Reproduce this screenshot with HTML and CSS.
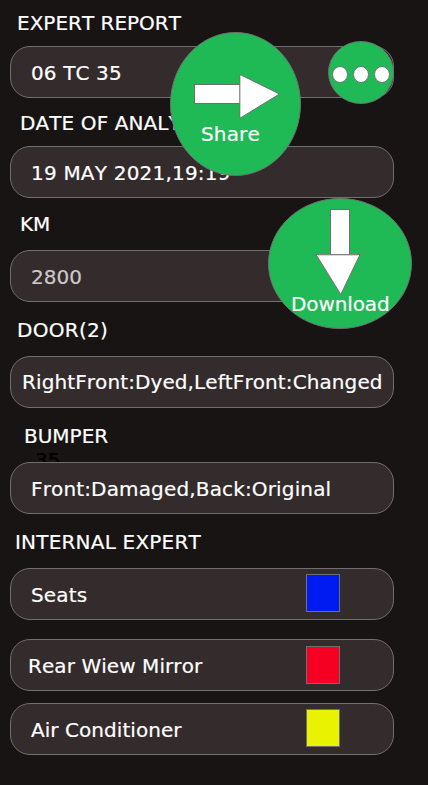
FILE: index.html
```html
<!DOCTYPE html>
<html lang="en">
<head>
<meta charset="utf-8">
<title>Expert Report</title>
<link rel="stylesheet" href="styles.css">
</head>
<body>
<main class="report">
  <section class="group group-report">
    <h2 class="label">EXPERT REPORT</h2>
    <div class="field">06 TC 35</div>
  </section>
  <section class="group group-date">
    <h2 class="label">DATE OF ANALYSIS</h2>
    <div class="field">19 MAY 2021,19:19</div>
  </section>
  <section class="group group-km">
    <h2 class="label">KM</h2>
    <div class="field muted">2800</div>
  </section>
  <section class="group group-door">
    <h2 class="label">DOOR(2)</h2>
    <div class="field">RightFront:Dyed,LeftFront:Changed</div>
  </section>
  <section class="group group-bumper">
    <h2 class="label">BUMPER</h2>
    <span class="ghost">35</span>
    <div class="field">Front:Damaged,Back:Original</div>
  </section>
  <section class="group group-internal">
    <h2 class="label">INTERNAL EXPERT</h2>
    <div class="field seats"><span>Seats</span><i class="swatch blue"></i></div>
    <div class="field mirror"><span>Rear Wiew Mirror</span><i class="swatch red"></i></div>
    <div class="field air"><span>Air Conditioner</span><i class="swatch yellow"></i></div>
  </section>

  <div class="action share">
    <svg width="131" height="144" viewBox="170 32 131 144">
      <ellipse class="disc" cx="235.5" cy="104" rx="65" ry="71.5"/>
      <rect class="arrow" x="194.5" y="84.5" width="45.5" height="19"/>
      <path class="arrow" d="M240 74.5 279.5 94 240 118.2Z"/>
      <path class="seam" d="M240.5 76V117"/>
    </svg>
    <span class="caption">Share</span>
  </div>
  <div class="action download">
    <svg width="144" height="131" viewBox="268 198 144 131">
      <ellipse class="disc" cx="340" cy="263.5" rx="71.5" ry="65"/>
      <rect class="arrow" x="330.5" y="209.5" width="19" height="45"/>
      <path class="arrow" d="M316 254.5H360L340.8 294.5Z"/>
      <path class="seam" d="M318 255.3H358"/>
    </svg>
    <span class="caption">Download</span>
  </div>
  <div class="action more">
    <svg width="66" height="63" viewBox="328 41 66 63">
      <ellipse class="disc" cx="361" cy="72.5" rx="32.5" ry="31"/>
      <ellipse class="arrow" cx="340" cy="74.5" rx="7.5" ry="8"/>
      <ellipse class="arrow" cx="361" cy="74.5" rx="7.5" ry="8"/>
      <ellipse class="arrow" cx="382" cy="74.5" rx="7.5" ry="8"/>
    </svg>
  </div>
</main>
</body>
</html>
```
FILE: styles.css
```css
* { box-sizing: border-box; }
body {
  margin: 0;
  background: #181413;
  color: #fff;
  font: 20px/24px "DejaVu Sans", sans-serif;
  font-kerning: none;
  font-variant-ligatures: none;
  -webkit-text-stroke: 0.2px currentColor;
}
.report {
  position: relative;
  width: 428px;
  height: 785px;
  padding: 11px 34px 0 10px;
  overflow: hidden;
}
.group {
  position: relative;
  display: flex;
  flex-direction: column;
  gap: 14px;
  margin-bottom: 16px;
}
.group-report { gap: 11px; margin-bottom: 13px; }
.group-date { gap: 11px; margin-bottom: 14px; }
.label {
  margin: 0;
  padding-left: 7px;
  font: inherit;
}
.group-date .label { padding-left: 10px; letter-spacing: 0.1px; }
.group-km .label { padding-left: 10px; }
.group-door .label { letter-spacing: 0.3px; }
.group-bumper .label { padding-left: 14px; }
.group-internal .label { padding-left: 5px; letter-spacing: 0.2px; }
.field {
  position: relative;
  height: 52px;
  padding: 14px 53px 0 20px;
  border: 1px solid #707070;
  border-radius: 20px;
  background: #342b2c;
  letter-spacing: 0.15px;
  white-space: nowrap;
}
.group-report .field { letter-spacing: 0.12px; }
.muted { color: #ccc9c9; letter-spacing: 0; }
.group-date .field { letter-spacing: 0.2px; }
.group-door .field { padding: 13px 0 0 11px; letter-spacing: 0.1px; }
.group-internal .field {
  display: flex;
  justify-content: space-between;
}
.group-internal .mirror { margin-top: 5px; padding-left: 17px; letter-spacing: 0.07px; }
.group-internal .air { margin-top: -2px; letter-spacing: 0.05px; }
.swatch {
  width: 34px;
  height: 38px;
  margin-top: -9px;
  border: 1px solid #707070;
}
.mirror .swatch { margin-top: -8px; }
.blue { background: #001af2; }
.red { background: #f50022; }
.yellow { background: #e9f200; }
.ghost {
  position: absolute;
  left: 25px;
  top: 24px;
  color: #000;
}
.action { position: absolute; }
.action svg { display: block; }
.share { left: 170px; top: 32px; }
.download { left: 268px; top: 198px; }
.more { left: 328px; top: 41px; }
.disc { fill: #1fba56; stroke: #707070; }
.arrow { fill: #fff; stroke: #707070; }
.seam { stroke: #d0d0d0; }
.caption { position: absolute; letter-spacing: 0.15px; }
.share .caption { left: 31px; top: 90px; }
.download .caption { left: 23px; top: 94px; letter-spacing: -0.1px; }
```
